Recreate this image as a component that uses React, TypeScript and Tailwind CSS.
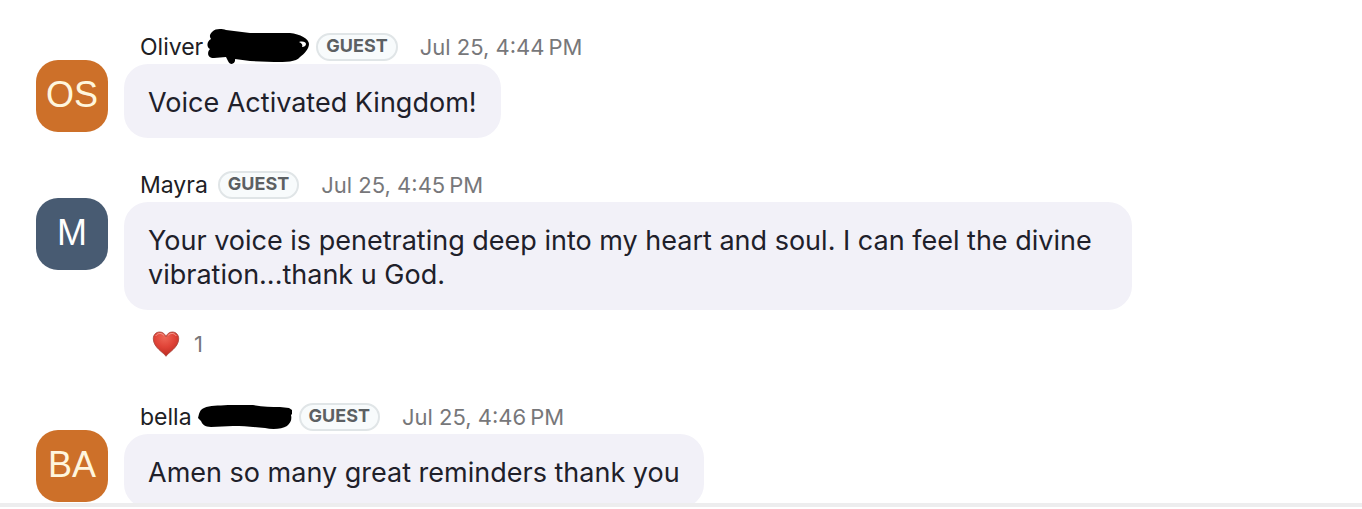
import type { ReactNode } from "react";

function ScribbleWide() {
  return (
    <svg className="ml-1 h-9 w-[103px] shrink-0" viewBox="207 28 103 36" aria-label="Name hidden" role="img">
      <path
        d="M212 31C216 27 222 28 226 29L250 32L290 32C300 33 309 38 309 43C309 48 304 53 300 56C296 61 286 61 274 61L250 60L235 58C236 63 230 65 228 60L226 56L214 57C207 57 207 51 210 48C206 46 207 40 211 38C209 35 210 33 212 31Z"
        fill="#000"
      />
      <path d="M299 41C303 40 306 41 306 43C306 45 304 46 302 46C303 44 302 42 299 41Z" fill="#fff" />
    </svg>
  );
}

function ScribbleNarrow() {
  return (
    <svg className="ml-1.5 h-9 w-[95px] shrink-0" viewBox="197 399 95 36" aria-label="Name hidden" role="img">
      <path
        d="M203 408C209 405 217 406 227 405L252 405C262 407 270 407 279 407L288 408L291 410L291 414L290 415C291 419 290 423 286 426C281 429 272 430 264 428C252 427 243 426 232 426L210 427C204 427 201 424 200 421L197 418L198 414C199 411 200 409 203 408Z"
        fill="#000"
      />
    </svg>
  );
}

function Heart() {
  return (
    <svg className="h-7 w-7" viewBox="0 0 28 28" aria-hidden="true">
      <defs>
        <radialGradient id="heart-fill" cx="0.45" cy="0.22" r="0.8">
          <stop offset="0" stopColor="#ee6656" />
          <stop offset="0.5" stopColor="#e04337" />
          <stop offset="1" stopColor="#b92a20" />
        </radialGradient>
      </defs>
      <path
        d="M14 26.300C12 22.800 1.300 17.500 1.300 8.800C1.300 4.800 4 2 7.600 2C10.600 2 13 3.800 14 6.800C15 3.800 17.400 2 20.400 2C24 2 26.700 4.800 26.700 8.800C26.700 17.500 16 22.800 14 26.300Z"
        fill="url(#heart-fill)"
        stroke="#a34036"
        strokeWidth="0.8"
      />
      <path d="M4 5.500C6 2.800 9.500 2.800 11.500 5M16.500 5C18.500 2.800 22 2.800 24 5.500" fill="none" stroke="#f7a196" strokeWidth="1" strokeLinecap="round" />
    </svg>
  );
}

type MessageProps = {
  initials: string;
  avatarClass: string;
  name: string;
  redaction?: ReactNode;
  time: string;
  children: ReactNode;
  reaction?: number;
};

function Message({ initials, avatarClass, name, redaction, time, children, reaction }: MessageProps) {
  return (
    <article className="flex shrink-0 items-start gap-4">
      <div className={`mt-[30px] flex size-[72px] shrink-0 items-center justify-center rounded-[22px] pb-0.5 font-['Liberation_Sans',sans-serif] text-4xl ${avatarClass}`}>
        {initials}
      </div>
      <div className="flex min-w-0 flex-col items-start">
        <header className="flex h-[34px] items-center pl-4">
          <span className="text-[23px] leading-7 text-[#202024]">{name}</span>
          {redaction}
          <span className={`${redaction ? "ml-1.5" : "ml-2.5"} flex h-7 items-center rounded-full border-2 border-[#e0e5e7] bg-[#f8fbfc] px-2 pb-0.5 text-lg font-bold leading-6 text-[#5c6063]`}>
            GUEST
          </span>
          <time className="ml-[22px] whitespace-nowrap text-[22px] leading-7 text-[#77777a]">{time}</time>
        </header>
        <div className="max-w-[1008px] rounded-3xl bg-[#f2f1f8] px-6 pb-[18px] pt-[22px]">
          <p className="text-[27px] leading-[34px] text-[#20202a]">{children}</p>
        </div>
        {reaction !== undefined && (
          <button type="button" aria-label={`Heart reaction, ${reaction}`} className="ml-7 mt-5 flex h-7 items-center gap-3.5 text-[22px] leading-7 text-[#77777a]">
            <Heart />
            {reaction}
          </button>
        )}
      </div>
    </article>
  );
}

export default function App() {
  return (
    <div className="flex h-screen flex-col bg-white pb-0.5 font-[Inter,sans-serif]">
      <main className="flex min-h-0 flex-1 flex-col overflow-hidden px-9 pt-[30px]">
        <Message initials="OS" avatarClass="bg-[#cd7029] text-[#fff6dd]" name="Oliver" redaction={<ScribbleWide />} time="Jul 25, 4:44&#8239;PM">
          Voice Activated Kingdom!
        </Message>
        <div className="h-[30px] shrink-0" />
        <Message initials="M" avatarClass="bg-[#485b72] text-white" name="Mayra" time="Jul 25, 4:45&#8239;PM" reaction={1}>
          Your voice is penetrating deep into my heart and soul. I can feel the divine vibration...thank u God.
        </Message>
        <div className="h-[42px] shrink-0" />
        <Message initials="BA" avatarClass="bg-[#cd7029] text-[#fff6dd]" name="bella" redaction={<ScribbleNarrow />} time="Jul 25, 4:46&#8239;PM">
          Amen so many great reminders thank you
        </Message>
      </main>
      <hr className="h-1 shrink-0 border-0 bg-[#ededee]" />
    </div>
  );
}
